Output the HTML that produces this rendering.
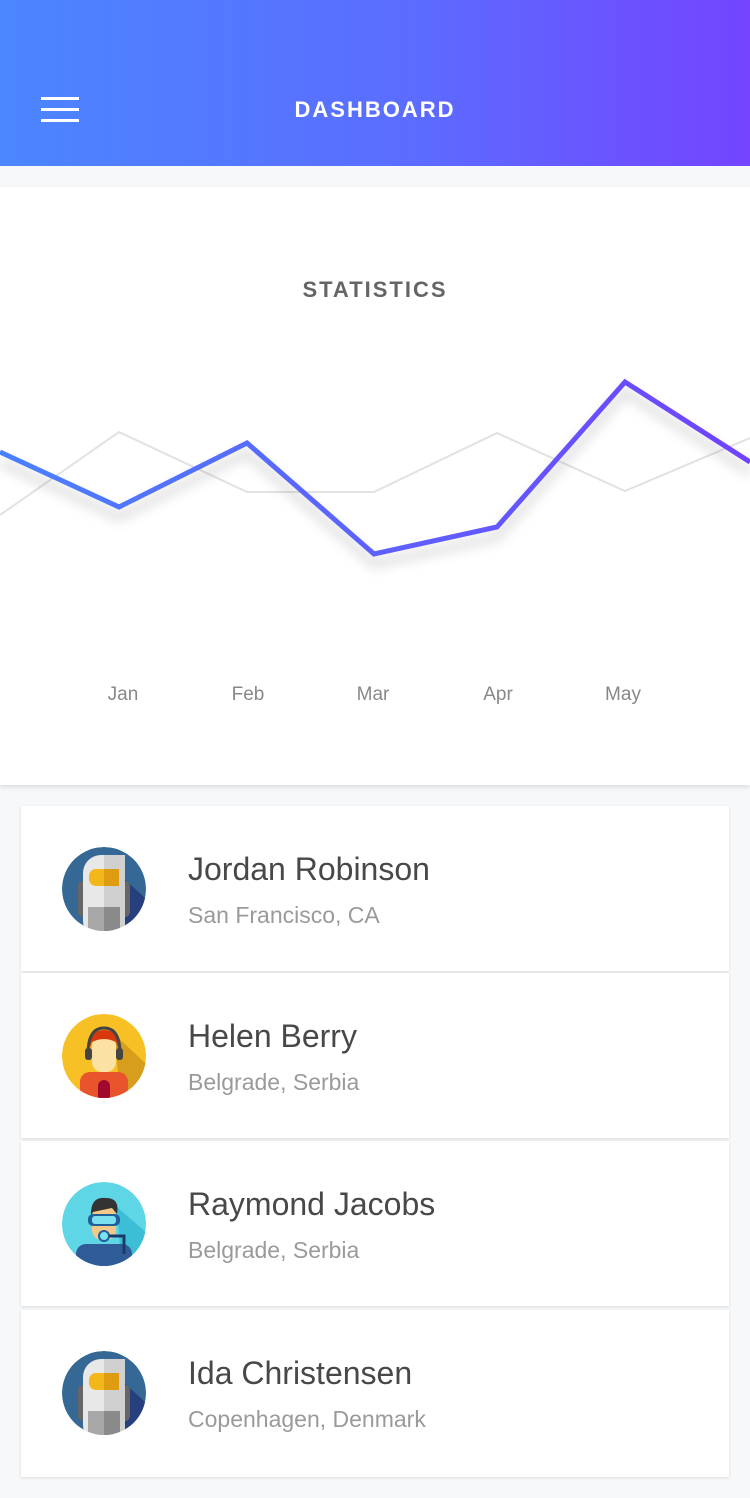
<!DOCTYPE html>
<html><head><style>
*{margin:0;padding:0;box-sizing:border-box}
body{width:750px;height:1498px;background:#f6f8fa;font-family:"Liberation Sans",Roboto,sans-serif;position:relative;overflow:hidden}
.hdr{position:absolute;left:0;top:0;width:750px;height:166px;background:linear-gradient(90deg,#4b86ff,#5b6cff 55%,#7444ff)}
.hdr .t{position:absolute;top:97px;left:0;width:750px;text-align:center;color:#fff;font-size:22px;letter-spacing:2px;font-weight:bold}
.burg{position:absolute;left:41px;top:97px;width:38px}
.burg i{display:block;height:3px;background:#fff;margin-bottom:8px}
.card{position:absolute;left:0;top:187px;width:750px;height:598px;background:#fff;box-shadow:0 2px 5px rgba(0,0,0,.12)}
.st{position:absolute;top:277px;width:750px;text-align:center;font-size:22px;letter-spacing:2px;color:#555;font-weight:bold;opacity:.9}
.m{position:absolute;top:684px;font-size:19px;color:#888;width:80px;text-align:center}
.row{position:absolute;left:21px;width:708px;height:165px;background:#fff;box-shadow:0 1px 3px rgba(0,0,0,.12)}
.row svg{position:absolute;left:41px;top:41px}
.nm{position:absolute;left:167px;top:45px;font-size:32px;color:#484848}
.loc{position:absolute;left:167px;top:96px;font-size:23px;color:#9a9a9a}
</style></head><body>
<div class="hdr"><div class="burg"><i></i><i></i><i></i></div><div class="t">DASHBOARD</div></div>
<div class="card"></div>
<div class="st">STATISTICS</div>
<svg style="position:absolute;left:0;top:187px" width="750" height="598">
<defs><linearGradient id="g" x1="0" x2="1"><stop offset="0" stop-color="#4a80ff"/><stop offset="1" stop-color="#7042ff"/></linearGradient>
<filter id="f" x="-10%" y="-50%" width="120%" height="200%"><feGaussianBlur stdDeviation="6"/></filter></defs>
<g transform="translate(0,-187)">
<polyline points="0,515 119,432 247,492 374,492 497,433 625,491 750,438" fill="none" stroke="#e2e2e2" stroke-width="2"/>
<polyline points="0,462 119,517 247,453 374,564 497,537 625,392 750,472" fill="none" stroke="rgba(0,0,0,.18)" stroke-width="6" filter="url(#f)"/>
<polyline points="0,452 119,507 247,443 374,554 497,527 625,382 750,462" fill="none" stroke="url(#g)" stroke-width="5" stroke-linejoin="miter"/>
</g></svg>
<div class="m" style="left:83px">Jan</div><div class="m" style="left:208px">Feb</div><div class="m" style="left:333px">Mar</div><div class="m" style="left:458px">Apr</div><div class="m" style="left:583px">May</div>

<div class="row" style="top:806px">
<svg width="84" height="84" viewBox="0 0 84 84"><defs><clipPath id="c1"><circle cx="42" cy="42" r="42"/></clipPath></defs><g clip-path="url(#c1)"><circle cx="42" cy="42" r="42" fill="#356894"/><path d="M58 28L95 62 62 95z" fill="#273f7c"/><rect x="16" y="34" width="52" height="36" rx="5" fill="#666"/><rect x="21" y="8" width="42" height="84" rx="18" fill="#e8e8e8"/><rect x="42" y="8" width="21" height="84" fill="#d0d0d0"/><rect x="27" y="22" width="30" height="17" rx="7" fill="#f4b71a"/><rect x="42" y="22" width="15" height="17" fill="#e09c10"/><rect x="26" y="60" width="32" height="30" fill="#a8a8a8"/><rect x="42" y="60" width="16" height="30" fill="#8a8a8a"/></g></svg>
<div class="nm">Jordan Robinson</div><div class="loc">San Francisco, CA</div></div>
<div class="row" style="top:973px">
<svg width="84" height="84" viewBox="0 0 84 84"><defs><clipPath id="c2"><circle cx="42" cy="42" r="42"/></clipPath></defs><g clip-path="url(#c2)"><circle cx="42" cy="42" r="42" fill="#f7c024"/><path d="M52 20L95 60 60 95z" fill="#d79d1c"/><rect x="18" y="58" width="48" height="40" rx="10" fill="#e8552c"/><rect x="36" y="66" width="12" height="30" rx="6" fill="#a0082c"/><rect x="30" y="22" width="24" height="36" rx="10" fill="#fbe1a3"/><path d="M28 34Q28 16 42 16Q56 16 56 34L54 28Q42 22 30 28Z" fill="#d8380e"/><path d="M26 40Q26 14 42 14Q58 14 58 40" fill="none" stroke="#444" stroke-width="3"/><rect x="23" y="34" width="7" height="12" rx="3" fill="#444"/><rect x="54" y="34" width="7" height="12" rx="3" fill="#444"/></g></svg>
<div class="nm">Helen Berry</div><div class="loc">Belgrade, Serbia</div></div>
<div class="row" style="top:1141px">
<svg width="84" height="84" viewBox="0 0 84 84"><defs><clipPath id="c3"><circle cx="42" cy="42" r="42"/></clipPath></defs><g clip-path="url(#c3)"><circle cx="42" cy="42" r="42" fill="#5fd6e6"/><path d="M55 25L95 60 60 95z" fill="#3cbfd6"/><rect x="14" y="62" width="56" height="34" rx="10" fill="#2f5c97"/><rect x="30" y="24" width="24" height="34" rx="10" fill="#f5c88a"/><path d="M29 34Q28 14 44 16Q58 16 55 32L50 26Q40 28 31 30Z" fill="#333"/><rect x="26" y="32" width="32" height="12" rx="5" fill="#1f5f9a"/><rect x="30" y="34" width="24" height="8" rx="3" fill="#7be0ef"/><circle cx="42" cy="54" r="5" fill="#7be0ef" stroke="#1f5f9a" stroke-width="2"/><path d="M47 54H62V72" fill="none" stroke="#1a3a6a" stroke-width="3"/></g></svg>
<div class="nm">Raymond Jacobs</div><div class="loc">Belgrade, Serbia</div></div>
<div class="row" style="top:1310px;height:167px">
<svg width="84" height="84" viewBox="0 0 84 84"><defs><clipPath id="c4"><circle cx="42" cy="42" r="42"/></clipPath></defs><g clip-path="url(#c4)"><circle cx="42" cy="42" r="42" fill="#356894"/><path d="M58 28L95 62 62 95z" fill="#273f7c"/><rect x="16" y="34" width="52" height="36" rx="5" fill="#666"/><rect x="21" y="8" width="42" height="84" rx="18" fill="#e8e8e8"/><rect x="42" y="8" width="21" height="84" fill="#d0d0d0"/><rect x="27" y="22" width="30" height="17" rx="7" fill="#f4b71a"/><rect x="42" y="22" width="15" height="17" fill="#e09c10"/><rect x="26" y="60" width="32" height="30" fill="#a8a8a8"/><rect x="42" y="60" width="16" height="30" fill="#8a8a8a"/></g></svg>
<div class="nm">Ida Christensen</div><div class="loc">Copenhagen, Denmark</div></div>
</body></html>
